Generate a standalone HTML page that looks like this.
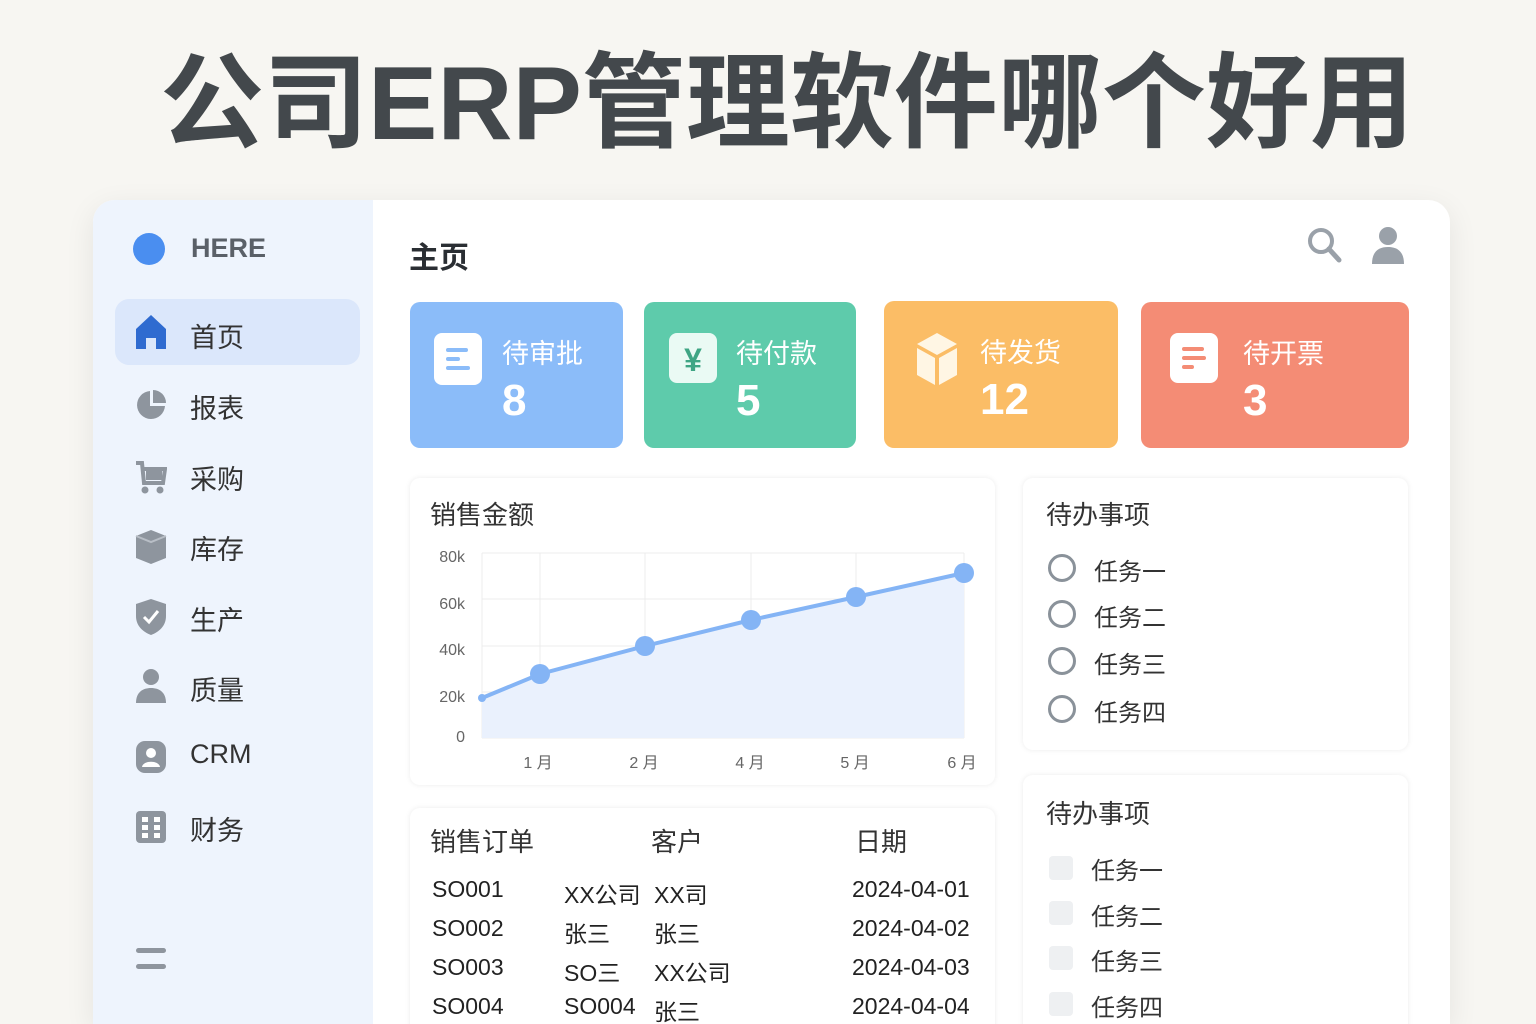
<!DOCTYPE html><html><head><meta charset="utf-8"><style>
*{margin:0;padding:0;box-sizing:border-box}
body{width:1536px;height:1024px;overflow:hidden;background:#f7f6f2;font-family:"Liberation Sans","Noto Sans CJK SC",sans-serif;position:relative;color:#333}
.a{position:absolute}
.title{left:160px;top:42px;font-size:104px;font-weight:bold;color:#43484c;white-space:nowrap;line-height:124px}
.card{left:93px;top:200px;width:1357px;height:824px;background:#fff;border-radius:22px 22px 0 0;box-shadow:0 8px 30px rgba(0,0,0,.08);overflow:hidden}
.side{left:0;top:0;width:280px;height:824px;background:#eef4fd}
.nav{font-size:27px;color:#333;left:97px}
.ic{left:42px}
.stat{border-radius:10px;color:#fff}
.stat .l{position:absolute;left:92px;top:30px;font-size:27px}
.stat .n{position:absolute;left:92px;top:74px;font-size:44px;font-weight:bold}
.panel{background:#fff;border-radius:10px;box-shadow:0 0 6px rgba(0,0,0,.08)}
.h{font-size:26px;color:#333}
.t{font-size:23px;color:#222}
.todo{font-size:24px;color:#333}
</style></head><body>
<div class="a title">公司ERP管理软件哪个好用</div>
<div class="a card">
<div class="a side">
 <div class="a" style="left:40px;top:33px;width:32px;height:32px;border-radius:50%;background:#4a8ef0"></div>
 <div class="a" style="left:98px;top:33px;font-size:27px;font-weight:bold;color:#5a6068">HERE</div>
 <div class="a" style="left:22px;top:99px;width:245px;height:66px;border-radius:14px;background:#dbe7fb"></div>
 <svg class="a ic" style="top:114px" width="32" height="36"><path d="M16 1 L31 15 V35 H21 V24 H11 V35 H1 V15Z" fill="#2f6bd0"/></svg>
 <div class="a nav" style="top:116px">首页</div>
 <svg class="a ic" style="top:189px" width="32" height="32"><path d="M15 2 A14 14 0 1 0 30 17 H15Z" fill="#8e959e"/><path d="M18 1 V14 H31 A13 13 0 0 0 18 1Z" fill="#8e959e"/></svg>
 <div class="a nav" style="top:187px">报表</div>
 <svg class="a ic" style="top:261px" width="32" height="34"><path d="M1 2 H7 L9 22 H28 L30 8 H8" fill="none" stroke="#8e959e" stroke-width="4"/><rect x="11" y="9" width="16" height="10" fill="#8e959e"/><circle cx="10" cy="29" r="3.5" fill="#8e959e"/><circle cx="25" cy="29" r="3.5" fill="#8e959e"/></svg>
 <div class="a nav" style="top:258px">采购</div>
 <svg class="a ic" style="top:329px" width="32" height="36"><path d="M16 1 L31 7 V29 L16 35 L1 29 V7Z" fill="#8e959e"/><path d="M1 7 L16 13 L31 7" fill="none" stroke="#b8bec6" stroke-width="2"/></svg>
 <div class="a nav" style="top:328px">库存</div>
 <svg class="a ic" style="top:398px" width="32" height="38"><path d="M16 1 L31 6 V18 C31 28 24 34 16 37 C8 34 1 28 1 18 V6Z" fill="#8e959e"/><path d="M9 19 L14 24 L23 13" fill="none" stroke="#fff" stroke-width="3"/></svg>
 <div class="a nav" style="top:399px">生产</div>
 <svg class="a ic" style="top:468px" width="32" height="36"><circle cx="16" cy="9" r="8" fill="#8e959e"/><path d="M1 35 C1 24 8 20 16 20 C24 20 31 24 31 35Z" fill="#8e959e"/></svg>
 <div class="a nav" style="top:469px">质量</div>
 <svg class="a ic" style="top:540px" width="32" height="34"><rect x="1" y="1" width="30" height="32" rx="9" fill="#8e959e"/><circle cx="16" cy="13" r="5" fill="#fff"/><path d="M7 27 C8 20 24 20 25 27" fill="#fff"/></svg>
 <div class="a nav" style="top:539px">CRM</div>
 <svg class="a ic" style="top:610px" width="32" height="34"><rect x="1" y="1" width="30" height="32" rx="4" fill="#8e959e"/><g fill="#fff"><rect x="7" y="7" width="6" height="5"/><rect x="19" y="7" width="6" height="5"/><rect x="7" y="15" width="6" height="5"/><rect x="19" y="15" width="6" height="5"/><rect x="7" y="23" width="6" height="5"/><rect x="19" y="23" width="6" height="5"/></g></svg>
 <div class="a nav" style="top:609px">财务</div>
 <div class="a" style="left:43px;top:748px;width:30px;height:5px;border-radius:3px;background:#8e959e"></div>
 <div class="a" style="left:43px;top:764px;width:30px;height:5px;border-radius:3px;background:#8e959e"></div>
</div>
<div class="a" style="left:316px;top:33px;font-size:30px;font-weight:bold;color:#2a2e33">主页</div>
<svg class="a" style="left:1213px;top:26px" width="36" height="38"><circle cx="15" cy="15" r="11" fill="none" stroke="#9aa1a9" stroke-width="4"/><path d="M23 23 L33 34" stroke="#9aa1a9" stroke-width="5" stroke-linecap="round"/></svg>
<svg class="a" style="left:1278px;top:25px" width="34" height="40"><circle cx="17" cy="11" r="9" fill="#9aa1a9"/><path d="M1 39 C1 26 8 22 17 22 C26 22 33 26 33 39Z" fill="#9aa1a9"/></svg>

<div class="a stat" style="left:317px;top:102px;width:213px;height:146px;background:#8bbcf9"><svg class="a" style="left:24px;top:31px" width="48" height="52"><rect width="48" height="52" rx="8" fill="#fff"/><rect x="12" y="15" width="22" height="4" rx="2" fill="#8bbcf9"/><rect x="12" y="24" width="14" height="4" rx="2" fill="#8bbcf9"/><rect x="12" y="33" width="24" height="4" rx="2" fill="#8bbcf9"/></svg><div class="l">待审批</div><div class="n">8</div></div>
<div class="a stat" style="left:551px;top:102px;width:212px;height:146px;background:#5ecbab"><svg class="a" style="left:25px;top:31px" width="48" height="50"><rect width="48" height="50" rx="8" fill="#eafaf4"/><text x="24" y="38" text-anchor="middle" font-size="32" font-weight="bold" fill="#3fa584" font-family="Liberation Sans">¥</text></svg><div class="l">待付款</div><div class="n">5</div></div>
<div class="a stat" style="left:791px;top:101px;width:234px;height:147px;background:#fbbd66"><svg class="a" style="left:29px;top:30px" width="48" height="56"><path d="M24 2 L44 13 L24 24 L4 13Z" fill="#fff6e4"/><path d="M4 17 L22 27 V54 L4 44Z" fill="#fff6e4"/><path d="M44 17 L26 27 V54 L44 44Z" fill="#fff6e4"/></svg><div class="l" style="left:96px">待发货</div><div class="n" style="left:96px">12</div></div>
<div class="a stat" style="left:1048px;top:102px;width:268px;height:146px;background:#f48c75"><svg class="a" style="left:29px;top:31px" width="48" height="50"><rect width="48" height="50" rx="8" fill="#fff"/><rect x="12" y="14" width="22" height="4" rx="2" fill="#f48c75"/><rect x="12" y="23" width="24" height="4" rx="2" fill="#f48c75"/><rect x="12" y="32" width="12" height="4" rx="2" fill="#f48c75"/></svg><div class="l" style="left:102px">待开票</div><div class="n" style="left:102px">3</div></div>

<div class="a panel" style="left:317px;top:278px;width:585px;height:307px"></div>
<div class="a h" style="left:337px;top:295px">销售金额</div>
<svg class="a" style="left:317px;top:278px" width="585" height="307" font-family="Liberation Sans" font-size="16" fill="#666">
<g stroke="#ececec"><line x1="72" y1="75" x2="554" y2="75"/><line x1="72" y1="121" x2="554" y2="121"/><line x1="72" y1="168" x2="554" y2="168"/><line x1="72" y1="214" x2="554" y2="214"/><line x1="72" y1="260" x2="554" y2="260"/><line x1="72" y1="75" x2="72" y2="260"/><line x1="130" y1="75" x2="130" y2="260"/><line x1="235" y1="75" x2="235" y2="260"/><line x1="341" y1="75" x2="341" y2="260"/><line x1="446" y1="75" x2="446" y2="260"/><line x1="554" y1="75" x2="554" y2="260"/></g>
<path d="M72 220 L130 196 L235 168 L341 142 L446 119 L554 95 V260 H72Z" fill="#eaf1fd"/>
<path d="M72 220 L130 196 L235 168 L341 142 L446 119 L554 95" fill="none" stroke="#84b4f5" stroke-width="4"/>
<g fill="#84b4f5"><circle cx="72" cy="220" r="4"/><circle cx="130" cy="196" r="10"/><circle cx="235" cy="168" r="10"/><circle cx="341" cy="142" r="10"/><circle cx="446" cy="119" r="10"/><circle cx="554" cy="95" r="10"/></g>
<text x="55" y="84" text-anchor="end">80k</text><text x="55" y="131" text-anchor="end">60k</text><text x="55" y="177" text-anchor="end">40k</text><text x="55" y="224" text-anchor="end">20k</text><text x="55" y="264" text-anchor="end">0</text>
<g text-anchor="middle" font-family="Liberation Sans,Noto Sans CJK SC"><text x="128" y="290">1 月</text><text x="234" y="290">2 月</text><text x="340" y="290">4 月</text><text x="445" y="290">5 月</text><text x="552" y="290">6 月</text></g>
</svg>

<div class="a panel" style="left:317px;top:608px;width:585px;height:430px"></div>
<div class="a h" style="left:337px;top:622px">销售订单</div><div class="a h" style="left:558px;top:622px">客户</div><div class="a h" style="left:762px;top:622px">日期</div>
<div class="a t" style="left:339px;top:676px">SO001</div><div class="a t" style="left:471px;top:676px">XX公司</div><div class="a t" style="left:561px;top:676px">XX司</div><div class="a t" style="left:759px;top:676px">2024-04-01</div>
<div class="a t" style="left:339px;top:715px">SO002</div><div class="a t" style="left:471px;top:715px">张三</div><div class="a t" style="left:561px;top:715px">张三</div><div class="a t" style="left:759px;top:715px">2024-04-02</div>
<div class="a t" style="left:339px;top:754px">SO003</div><div class="a t" style="left:471px;top:754px">SO三</div><div class="a t" style="left:561px;top:754px">XX公司</div><div class="a t" style="left:759px;top:754px">2024-04-03</div>
<div class="a t" style="left:339px;top:793px">SO004</div><div class="a t" style="left:471px;top:793px">SO004</div><div class="a t" style="left:561px;top:793px">张三</div><div class="a t" style="left:759px;top:793px">2024-04-04</div>

<div class="a panel" style="left:930px;top:278px;width:385px;height:272px"></div>
<div class="a h" style="left:953px;top:295px">待办事项</div>
<div class="a" style="left:955px;top:354px;width:28px;height:28px;border:3px solid #8a929a;border-radius:50%"></div><div class="a todo" style="left:1001px;top:352px">任务一</div>
<div class="a" style="left:955px;top:400px;width:28px;height:28px;border:3px solid #8a929a;border-radius:50%"></div><div class="a todo" style="left:1001px;top:398px">任务二</div>
<div class="a" style="left:955px;top:447px;width:28px;height:28px;border:3px solid #8a929a;border-radius:50%"></div><div class="a todo" style="left:1001px;top:445px">任务三</div>
<div class="a" style="left:955px;top:495px;width:28px;height:28px;border:3px solid #8a929a;border-radius:50%"></div><div class="a todo" style="left:1001px;top:493px">任务四</div>

<div class="a panel" style="left:930px;top:575px;width:385px;height:460px"></div>
<div class="a h" style="left:953px;top:594px">待办事项</div>
<div class="a" style="left:956px;top:656px;width:24px;height:24px;background:#eef0f2;border-radius:4px"></div><div class="a todo" style="left:998px;top:651px">任务一</div>
<div class="a" style="left:956px;top:701px;width:24px;height:24px;background:#eef0f2;border-radius:4px"></div><div class="a todo" style="left:998px;top:697px">任务二</div>
<div class="a" style="left:956px;top:746px;width:24px;height:24px;background:#eef0f2;border-radius:4px"></div><div class="a todo" style="left:998px;top:742px">任务三</div>
<div class="a" style="left:956px;top:792px;width:24px;height:24px;background:#eef0f2;border-radius:4px"></div><div class="a todo" style="left:998px;top:788px">任务四</div>
</div>
</body></html>
